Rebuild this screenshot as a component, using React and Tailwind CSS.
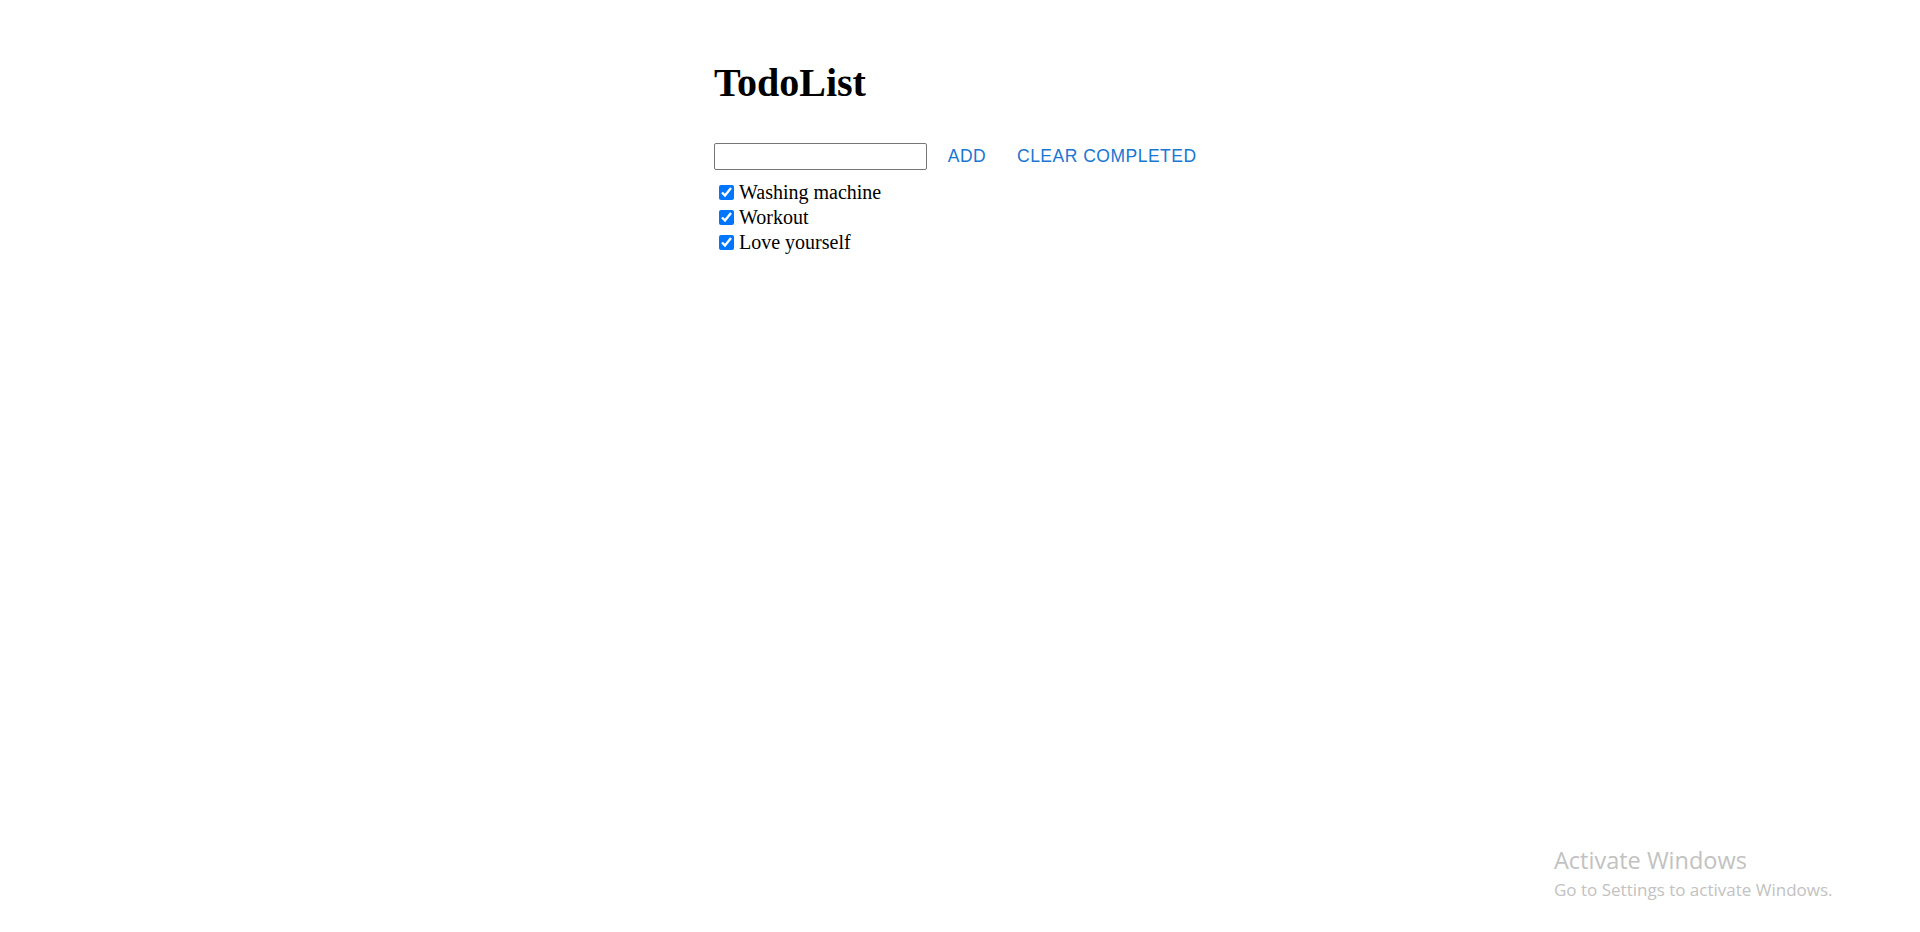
import React from "react";

const items = ["Washing machine", "Workout", "Love yourself"];

export default function App() {
  return (
    <div className="relative min-h-[932px] w-full bg-white">
      <div className="pl-[714px] pt-[60px]">
        <h1
          className="m-0 text-[40px] font-bold leading-[46px] text-black"
          style={{ fontFamily: '"Liberation Serif", "Times New Roman", serif' }}
        >
          TodoList
        </h1>
        <div className="mt-[27px] flex h-[46px] items-center">
          <input
            type="text"
            className="h-[27px] w-[213px] rounded-[2px] border border-[#767676] bg-white px-[3px] text-[17px] outline-none"
            style={{ fontFamily: '"Liberation Sans", Arial, sans-serif' }}
          />
          <button
            className="flex h-[46px] min-w-[80px] items-center justify-center px-[10px] text-[17.5px] uppercase tracking-[0.5px] text-[#1976d2]"
            style={{ fontFamily: '"Liberation Sans", Arial, sans-serif' }}
          >
            ADD
          </button>
          <button
            className="flex h-[46px] min-w-[80px] items-center justify-center px-[10px] text-[17.5px] uppercase tracking-[0.5px] text-[#1976d2]"
            style={{ fontFamily: '"Liberation Sans", Arial, sans-serif' }}
          >
            CLEAR COMPLETED
          </button>
        </div>
        <ul className="m-0 mt-[1px] list-none p-0">
          {items.map((t) => (
            <li
              key={t}
              className="flex h-[25px] items-center text-[20px] leading-[25px] text-black"
              style={{ fontFamily: '"Liberation Serif", "Times New Roman", serif' }}
            >
              <input
                type="checkbox"
                defaultChecked
                className="ml-[5px] mr-[5px] h-[15px] w-[15px] accent-[#0075ff]"
              />
              <span>{t}</span>
            </li>
          ))}
        </ul>
      </div>
      <div
        className="absolute left-[1554px] top-[845px] text-[#c2c2c2]"
        style={{ fontFamily: '"Open Sans", "Noto Sans", sans-serif' }}
      >
        <div className="text-[23.5px] leading-[31px]">Activate Windows</div>
        <div className="text-[17px] leading-[27px]">Go to Settings to activate Windows.</div>
      </div>
    </div>
  );
}
